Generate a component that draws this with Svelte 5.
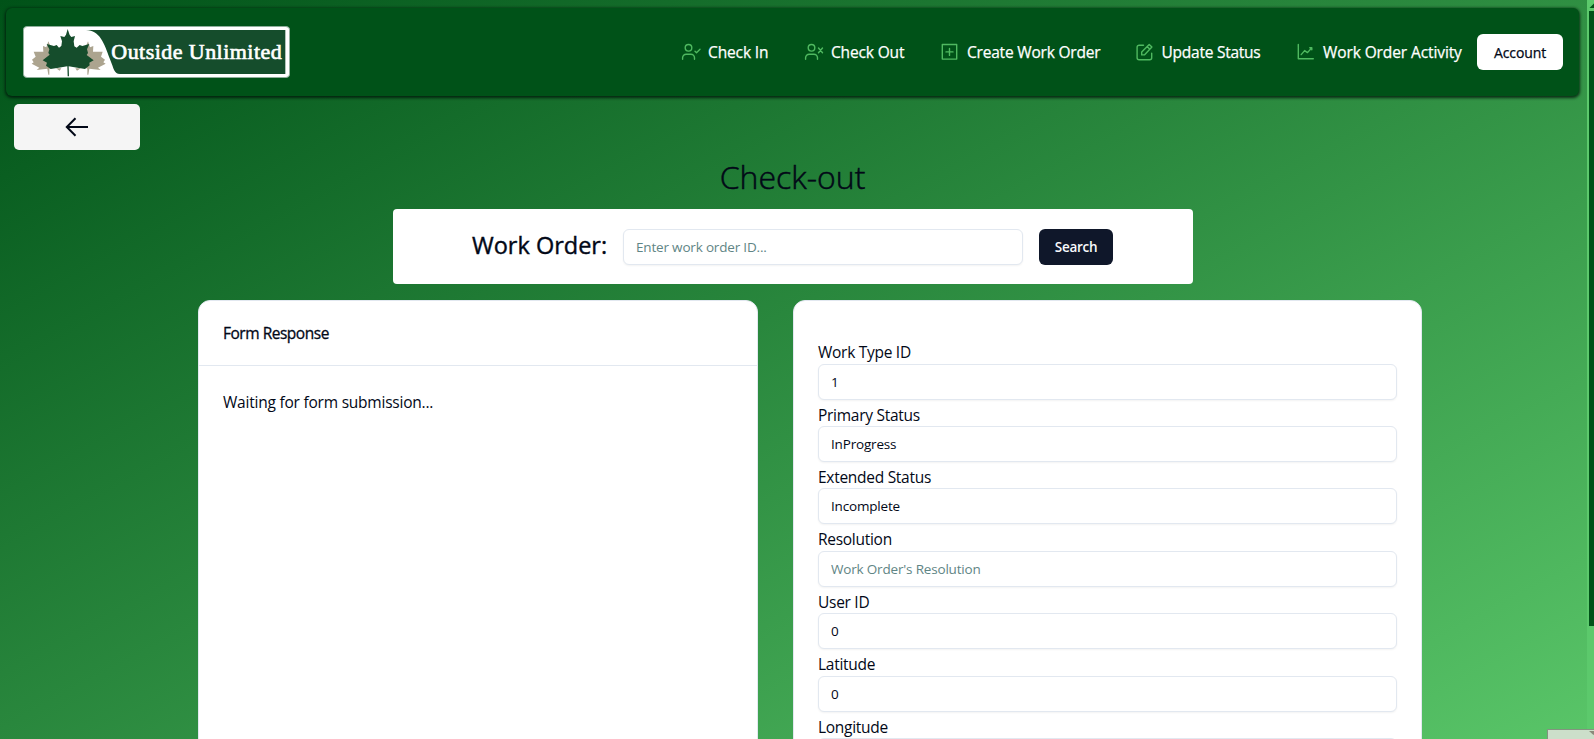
<script>
  const links = [
    { label: 'Check In', icon: 'in', x: 123, ls: -0.12 },
    { label: 'Check Out', icon: 'out', x: 136, ls: -0.15 },
    { label: 'Create Work Order', icon: 'plus', x: 194.5, ls: -0.2 },
    { label: 'Update Status', icon: 'edit', x: 161.5, ls: -0.25 },
    { label: 'Work Order Activity', icon: 'chart', x: 181, ls: -0.1 }
  ];
  const fields = [
    { label: 'Work Type ID', value: '1' },
    { label: 'Primary Status', value: 'InProgress' },
    { label: 'Extended Status', value: 'Incomplete' },
    { label: 'Resolution', value: '', placeholder: "Work Order's Resolution" },
    { label: 'User ID', value: '0' },
    { label: 'Latitude', value: '0' },
    { label: 'Longitude', value: '0' }
  ];
</script>

<div class="window">
  <div class="page">
    <nav>
      <svg class="logo" viewBox="69 78 801 156" preserveAspectRatio="none">
        <rect x="70" y="79.5" width="799" height="153" rx="11" fill="#fff" stroke="#8fae9b" stroke-width="3" />
        <path d="M258 90H856V222H360C342 222 342 207 330 178C312 128 300 92 258 90Z" fill="#154d2c" />
        <g fill="#aca48f">
          <path d="M145 124L139 142 129 138 130 155 101 155 107 170 96 179 101 187 95 191 118 203 110 210 142 206 145 224 148 224 148 206 160 200 160 160Z" />
          <path d="M264 124L270 142 280 138 279 155 308 155 303 170 315 179 310 187 317 191 294 203 302 210 268 206 265 224 262 224 262 206 250 200 250 160Z" />
          <path d="M168 205H184L179 212ZM226 205H242L231 212Z" />
        </g>
        <path d="M203 87L209 105 214 111 225 108 221 124 223 139 230 143 239 135 247 138 268 132 261 148 264 159 260 165 281 181 268 188 269 196 255 207 232 203 206 199 207 229 203 229 202 199 176 203 152 207 138 197 141 188 128 181 149 164 145 159 148 148 140 132 162 138 170 135 177 143 184 138 186 124 181 108 193 111 198 104Z" fill="#154d2c" />
        <text x="334" y="178" textLength="511" lengthAdjust="spacing" class="brand">Outside Unlimited</text>
      </svg>
      <div class="links">
        {#each links as l}
          <a style:width="{l.x}px" style:letter-spacing="{l.ls}px">
            <svg viewBox="0 0 20 20" width="20" height="20">
              {#if l.icon === 'in' || l.icon === 'out'}
                <circle cx="7.5" cy="5.8" r="3.3" />
                <path d="M1.6 17.2v-1.4a3.6 3.6 0 0 1 3.6-3.6h4.7a3.6 3.6 0 0 1 3.6 3.6v1.4" />
                {#if l.icon === 'in'}<path d="M14 9.2l1.5 1.5 3.5-3.5" />{:else}<path d="M14.5 6l4 4.7M18.5 6l-4 4.7" />{/if}
              {:else if l.icon === 'plus'}
                <path d="M2.3 2.5h14.4v14.6H2.3zM9.5 6.4v7M6 9.9h7" />
              {:else if l.icon === 'edit'}
                <path d="M8.5 3.2H4.1a2 2 0 0 0-2 2v10.6a2 2 0 0 0 2 2h10.6a2 2 0 0 0 2-2v-4.6" />
                <path d="M6.7 12.9v-3l7.5-7.5 2.7 2.7-7.5 7.8zM12.2 4.6l2.6 2.6" />
              {:else}
                <path d="M2.3 2.5v14.3h15M5.2 12.6l3.4-4 2.9 2 4.3-4.8M13.8 5.8h2v2" />
              {/if}
            </svg>
            <span>{l.label}</span>
          </a>
        {/each}
        <button class="account">Account</button>
      </div>
    </nav>

    <button class="back" aria-label="Back">
      <svg viewBox="0 0 24 20" width="24" height="20"><path d="M23 10H2.2M10.5 1.3L1.8 10l8.7 8.7" /></svg>
    </button>

    <h1>Check-out</h1>

    <section class="search">
      <h2>Work Order:</h2>
      <input class="query" placeholder="Enter work order ID..." />
      <button class="go">Search</button>
    </section>

    <div class="cards">
      <section class="card response">
        <header>Form Response</header>
        <p>Waiting for form submission...</p>
      </section>
      <section class="card form">
        {#each fields as f}
          <label>
            <span>{f.label}</span>
            <input value={f.value} placeholder={f.placeholder ?? ''} />
          </label>
        {/each}
      </section>
    </div>
  </div>
  <div class="scroll">
    <svg width="7" height="11"><path d="M2.5 8L7 3.5V8z" fill="#005218" /></svg>
    <div class="thumb"></div>
  </div>
  <div class="popup"><svg width="5" height="4"><path d="M0 0h9L4.5 4z" fill="#8a8a7a" /></svg></div>
</div>

<style>
  :global(body) { overflow: hidden; }
  * { box-sizing: border-box; }
  .window {
    position: relative;
    display: flex;
    width: 1594px;
    height: 739px;
    overflow: hidden;
    font-family: 'Open Sans', 'Noto Sans', sans-serif;
    font-size: 15.5px;
    color: #020817;
  }
  .page {
    width: 1587px;
    height: 739px;
    padding: 8px 8px 0 6px;
    background: linear-gradient(152deg, #005218, #59c568);
    overflow: hidden;
  }
  nav {
    display: flex;
    align-items: center;
    justify-content: space-between;
    height: 88px;
    padding: 0 16px 0 17px;
    border-radius: 6px;
    background: #005218;
    box-shadow: 0 1px 3px 1px rgba(0, 20, 10, 0.8);
  }
  .logo { width: 267px; height: 52px; }
  .brand { font-family: 'Liberation Serif', serif; font-size: 66px; fill: #fff; stroke: #fff; stroke-width: 2; }
  .links { display: flex; align-items: center; }
  a { display: flex; align-items: center; gap: 7px; color: #fff; font-size: 15.5px; white-space: nowrap; -webkit-text-stroke: 0.25px #fff; }
  a svg { flex: none; fill: none; stroke: #4fb960; stroke-width: 1.4; stroke-linecap: round; stroke-linejoin: round; }
  button { padding: 0; border: 0; font-family: inherit; }
  .account { width: 86px; height: 36px; border-radius: 6px; background: #fff; font-size: 14px; letter-spacing: -0.1px; color: #020817; -webkit-text-stroke: 0.25px #020817; }
  .back {
    display: flex;
    align-items: center;
    justify-content: center;
    width: 126px;
    height: 46px;
    margin: 8px 0 0 8px;
    border-radius: 5px;
    background: #f5f5f5;
  }
  .back path { fill: none; stroke: #020817; stroke-width: 2; }
  h1 { height: 48px; margin: 3px 0 8px; text-align: center; font-size: 32px; line-height: 48px; font-weight: 300; -webkit-text-stroke: 0.5px #020817; }
  .search {
    display: flex;
    align-items: center;
    gap: 16px;
    width: 800px;
    height: 75px;
    margin-left: 387px;
    padding-left: 79px;
    border-radius: 4px;
    background: #fff;
  }
  h2 { width: 135px; margin: 0; padding-bottom: 4px; font-size: 23.5px; font-weight: 400; white-space: nowrap; -webkit-text-stroke: 0.4px #020817; }
  input {
    width: 100%;
    height: 36px;
    padding: 0 12px;
    border: 1px solid #e2e8f0;
    border-radius: 6px;
    background: #fff;
    box-shadow: 0 1px 2px rgba(0, 0, 0, 0.05);
    font: 13.5px 'Open Sans', sans-serif;
    letter-spacing: -0.18px;
    color: #020817;
  }
  input::placeholder { color: #5f8585; opacity: 1; }
  .query { flex: none; width: 400px; }
  .go { width: 74px; height: 36px; border-radius: 6px; background: #0f172a; color: #f8fafc; font-size: 13.5px; font-weight: 600; letter-spacing: -0.3px; }
  .cards { display: flex; gap: 35px; margin: 16px 0 0 192px; }
  .card { height: 600px; border: 1px solid #e2e8f0; border-radius: 12px; background: #fff; }
  .response { width: 560px; }
  .response header { height: 65px; padding-left: 24px; border-bottom: 1px solid #e2e8f0; line-height: 65px; letter-spacing: -0.48px; -webkit-text-stroke: 0.3px #020817; }
  .response p { margin: 24px; line-height: 25px; letter-spacing: -0.22px; }
  .form { width: 629px; padding: 38.3px 24px 0; }
  label { display: block; height: 62.4px; }
  label span { display: block; height: 24.3px; line-height: 26px; letter-spacing: -0.28px; }
  .scroll { width: 7px; height: 739px; background: #5cc96c; }
  .scroll svg { display: block; }
  .thumb { width: 5px; height: 615px; margin-left: 2px; background: #005218; }
  .popup {
    position: absolute;
    right: 0;
    bottom: 0;
    display: flex;
    justify-content: flex-end;
    width: 47px;
    height: 10px;
    padding-top: 1px;
    border-top: 1px solid #83937f;
    border-left: 1px solid #83937f;
    background: #ccdfca;
  }
</style>
